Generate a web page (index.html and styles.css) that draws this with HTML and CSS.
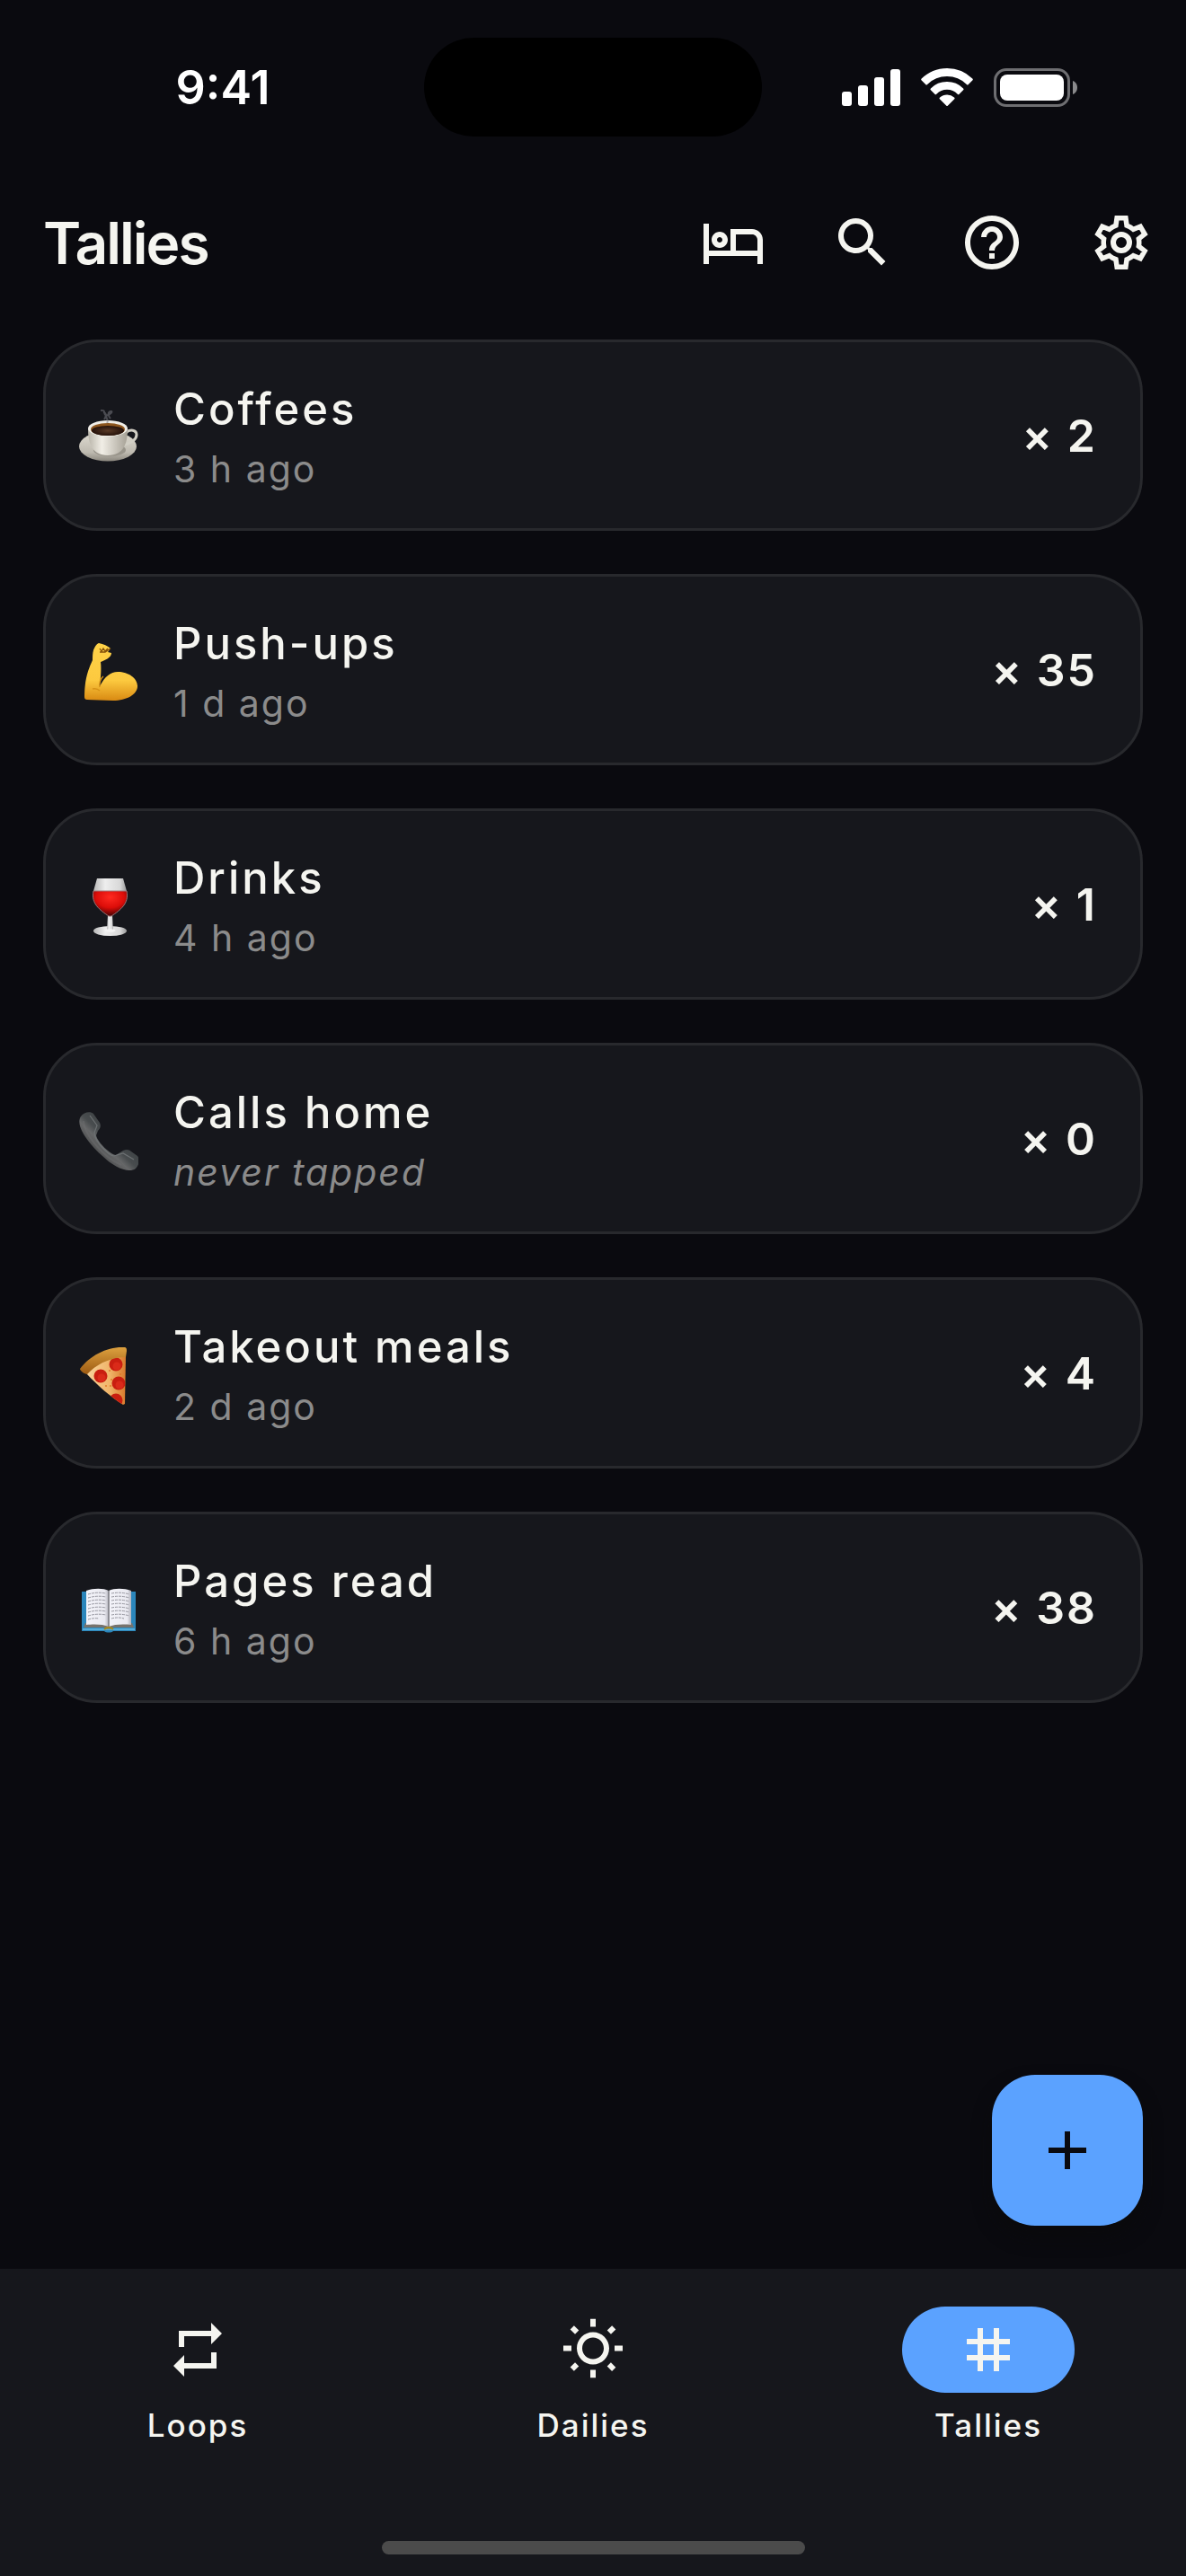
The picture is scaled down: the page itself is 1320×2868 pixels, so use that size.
FILE: index.html
```html
<!DOCTYPE html>
<html lang="en">
<head>
<meta charset="utf-8">
<meta name="viewport" content="width=device-width, initial-scale=1">
<title>Tallies</title>
<link rel="stylesheet" href="styles.css">
</head>
<body>
<div class="app">
  <div class="status">
    <time class="status-time">9:41</time>
    <div class="island"></div>
    <div class="status-icons">
      <svg width="65" height="41" viewBox="0 0 65 41" fill="#fff" aria-label="Signal">
        <rect x="0" y="25" width="11" height="16" rx="3"/><rect x="18" y="18" width="11" height="23" rx="3"/><rect x="36" y="9" width="11" height="32" rx="3"/><rect x="54" y="0" width="11" height="41" rx="3"/>
      </svg>
      <svg width="58" height="42" viewBox="0 0 58 42" fill="#fff" aria-label="Wi-Fi">
        <path d="M29 0C18 0 8 4.300 .7 11.500a1.300 1.300 0 0 0 0 1.900l4.500 4.500a1.300 1.300 0 0 0 1.900 0A31.400 31.400 0 0 1 29 9a31.400 31.400 0 0 1 21.900 8.900 1.300 1.300 0 0 0 1.900 0l4.500-4.500a1.300 1.300 0 0 0 0-1.900A40.400 40.400 0 0 0 29 0z"/>
        <path d="M29 15a25.500 25.500 0 0 0-18.100 7.400 1.300 1.300 0 0 0 0 1.900l4.500 4.500a1.300 1.300 0 0 0 1.900 0A16.800 16.800 0 0 1 29 23.800c4.500 0 8.600 1.800 11.700 5a1.300 1.300 0 0 0 1.900 0l4.500-4.500a1.300 1.300 0 0 0 0-1.900A25.500 25.500 0 0 0 29 15z"/>
        <path d="M29 29.500c-3 0-5.700 1-7.900 2.900a1.300 1.300 0 0 0 0 2l7 7.200a1.300 1.300 0 0 0 1.900 0l7-7.200a1.300 1.300 0 0 0 0-2A12 12 0 0 0 29 29.500z"/>
      </svg>
      <svg width="93" height="43" viewBox="0 0 93 43" aria-label="Battery">
        <rect x="1.500" y="1.500" width="82" height="40" rx="12.500" fill="none" stroke="#6e6e71" stroke-width="3"/>
        <rect x="7" y="7" width="71" height="29" rx="8" fill="#fff"/>
        <path d="M88 14c3 1 5 4 5 7.500s-2 6.500-5 7.500z" fill="#8a8a8c"/>
      </svg>
    </div>
  </div>

  <header class="header">
    <h1 class="title">Tallies</h1>
    <div class="actions">
      <button class="icon-button" type="button" aria-label="Rest mode"><svg class="icon" viewBox="0 0 24 24"><path d="M7 14c1.660 0 3-1.340 3-3S8.660 8 7 8s-3 1.340-3 3 1.340 3 3 3zm0-4c.55 0 1 .45 1 1s-.45 1-1 1-1-.45-1-1 .45-1 1-1zm12-3h-8v8H3V5H1v15h2v-3h18v3h2v-9c0-2.210-1.790-4-4-4zm2 8h-8V9h6c1.100 0 2 .9 2 2v4z"/></svg></button>
      <button class="icon-button" type="button" aria-label="Search"><svg class="icon" viewBox="0 0 24 24"><path d="M15.500 14h-.79l-.28-.27C15.410 12.590 16 11.110 16 9.500 16 5.910 13.090 3 9.500 3S3 5.910 3 9.500 5.910 16 9.500 16c1.610 0 3.090-.59 4.230-1.570l.27.28v.79l5 4.990L20.490 19l-4.990-5zm-6 0C7.010 14 5 11.990 5 9.500S7.010 5 9.500 5 14 7.010 14 9.500 11.990 14 9.500 14z"/></svg></button>
      <button class="icon-button" type="button" aria-label="Help"><svg class="icon" viewBox="0 0 24 24"><path d="M11 18h2v-2h-2v2zm1-16C6.480 2 2 6.480 2 12s4.480 10 10 10 10-4.480 10-10S17.520 2 12 2zm0 18c-4.410 0-8-3.590-8-8s3.590-8 8-8 8 3.590 8 8-3.590 8-8 8zm0-14c-2.210 0-4 1.790-4 4h2c0-1.100.9-2 2-2s2 .9 2 2c0 2-3 1.750-3 5h2c0-2.250 3-2.500 3-5 0-2.210-1.790-4-4-4z"/></svg></button>
      <button class="icon-button" type="button" aria-label="Settings"><svg class="icon" viewBox="0 0 24 24">
        <defs><path id="gear" d="M14.440 2H9.570L9.130 5.070C8.510 5.330 7.940 5.670 7.420 6.070L4.550 4.890 2.110 9.110 4.550 11.030C4.490 11.500 4.490 12.500 4.550 12.990L2.110 14.900 4.550 19.110 7.420 17.950C7.940 18.350 8.510 18.690 9.140 18.930L9.580 22H14.430L14.870 18.930C15.490 18.670 16.070 18.330 16.590 17.950L19.460 19.110 21.890 14.900 19.450 12.990C19.520 12.500 19.520 11.500 19.450 11.030L21.890 9.110 19.460 4.890 16.590 6.070C16.070 5.670 15.490 5.330 14.870 5.070z"/><clipPath id="gear-clip"><use href="#gear"/></clipPath></defs>
        <use href="#gear" clip-path="url(#gear-clip)" fill="none" stroke="currentColor" stroke-width="3.700"/>
        <circle cx="12" cy="12" r="3" fill="none" stroke="currentColor" stroke-width="2"/></svg></button>
    </div>
  </header>

  <main class="main">
    <ul class="list">
      <li><button class="card" type="button">
        <svg class="emoji" viewBox="0 0 66 66" aria-hidden="true">
          <defs>
            <linearGradient id="cup" x1="0" x2="1"><stop offset="0" stop-color="#b9b5aa"/><stop offset=".35" stop-color="#f1eee6"/><stop offset="1" stop-color="#a6a196"/></linearGradient>
            <linearGradient id="saucer" x1="0" y1="0" x2="0" y2="1"><stop offset="0" stop-color="#e0ddd3"/><stop offset=".7" stop-color="#bebab0"/><stop offset="1" stop-color="#8b877e"/></linearGradient>
            <radialGradient id="brew"><stop offset="0" stop-color="#5a3a26"/><stop offset="1" stop-color="#24110a"/></radialGradient>
          </defs>
          <ellipse cx="32" cy="42" rx="32" ry="16.500" fill="url(#saucer)"/>
          <ellipse cx="34" cy="46" rx="18" ry="7" fill="#99958b"/>
          <path d="M52 27c5-5 12-3 12 2 0 6-6 9-14 11" fill="none" stroke="#d2cfc5" stroke-width="3"/>
          <path d="M10 22c0 16 4 30 22 30s22-14 22-30z" fill="url(#cup)"/>
          <ellipse cx="32" cy="22" rx="22" ry="9" fill="#efede7"/>
          <ellipse cx="32" cy="23" rx="19" ry="7" fill="#8d561e"/>
          <ellipse cx="32" cy="24.500" rx="18" ry="5.500" fill="url(#brew)"/>
          <path d="M24 2c7-1 2 4 6 5s9-5 5-4-2 6 0 8M31 7c-3 3 3 5 0 9M27 4c4 1 3 5 1 8" fill="none" stroke="#77777e" stroke-width="2" opacity=".55"/>
        </svg>
        <span class="info"><span class="name">Coffees</span><span class="when">3 h ago</span></span>
        <span class="count">× 2</span>
      </button></li>
      <li><button class="card" type="button">
        <svg class="emoji" viewBox="0 0 66 66" aria-hidden="true">
          <defs><linearGradient id="skin" x1="0" y1="0" x2="0" y2="1"><stop offset="0" stop-color="#ffd348"/><stop offset=".65" stop-color="#fcc93f"/><stop offset="1" stop-color="#d98a12"/></linearGradient></defs>
          <path d="M22 0c-3 1-5 5-6 8-1 3-1 7-1 11-4 9-9 20-9 41 0 2 1 3 3 3 8 0 18 1 29 1 15 0 27-7 27-16 0-9-10-16-22-16-8 0-14 5-20 16 1-10 2-19 1-27 5-2 12-5 12-10l-4-1 3-4c-3-3-8-5-13-6z" fill="url(#skin)"/>
          <path d="M23 6l2 3 2-3 2 3 3-3M23 10h6l6-4" fill="none" stroke="#85520a" stroke-width="1.300"/>
          <path d="M15 51c4-1 6 0 8 2M23 49c-1-4 1-10 4-12" fill="none" stroke="#d79317" stroke-width="1.500"/>
        </svg>
        <span class="info"><span class="name">Push-ups</span><span class="when">1 d ago</span></span>
        <span class="count">× 35</span>
      </button></li>
      <li><button class="card" type="button">
        <svg class="emoji" viewBox="0 0 66 66" aria-hidden="true">
          <defs>
            <linearGradient id="glass" x1="0" x2="1"><stop offset="0" stop-color="#b7b7b7"/><stop offset=".35" stop-color="#eee"/><stop offset=".8" stop-color="#d8d8d8"/><stop offset="1" stop-color="#999"/></linearGradient>
            <radialGradient id="wine" cx=".5" cy=".25" r=".75"><stop offset="0" stop-color="#ff2a20"/><stop offset=".55" stop-color="#dc0d09"/><stop offset="1" stop-color="#420304"/></radialGradient>
          </defs>
          <ellipse cx="34.500" cy="59.500" rx="18.500" ry="5.500" fill="url(#glass)"/>
          <path d="M32 42h5l1 17c-2 2-5 2-7 0z" fill="url(#glass)"/>
          <path d="M20 1h29l4 14H16z" fill="url(#glass)"/>
          <path d="M16 15h37c3 14-7 21-17 28h-3C23 36 13 29 16 15z" fill="url(#wine)" stroke="#9b7779"/>
          <ellipse cx="34.500" cy="59" rx="6" ry="1.800" fill="#f3f3f3"/>
        </svg>
        <span class="info"><span class="name">Drinks</span><span class="when">4 h ago</span></span>
        <span class="count">× 1</span>
      </button></li>
      <li><button class="card" type="button">
        <svg class="emoji" viewBox="0 0 66 66" aria-hidden="true">
          <defs><linearGradient id="phone" x1="0" y1="1" x2="1" y2="0"><stop offset=".2" stop-color="#3a3b3c"/><stop offset=".42" stop-color="#666768"/><stop offset=".5" stop-color="#484c4e"/><stop offset=".8" stop-color="#34393c"/></linearGradient></defs>
          <path d="M2 5c3-5 11-6 14-3l7 10c2 4 0 7-2 9l-2 5c1 7 15 21 22 22l8-5c4-2 7-1 9 1l7 5c3 3 2 10-2 14-8 6-25-2-37-14C11 36-5 15 2 5z" fill="url(#phone)"/>
          <path d="M12 4l8 11-3 8c0 9 15 25 22 26l10-3 12 7" fill="none" stroke="#6d7173" stroke-width="1.200"/>
          <path d="M5 10c0 14 22 41 42 49" fill="none" stroke="#707172" stroke-width="2" opacity=".4"/>
        </svg>
        <span class="info"><span class="name">Calls home</span><span class="when never">never tapped</span></span>
        <span class="count">× 0</span>
      </button></li>
      <li><button class="card" type="button">
        <svg class="emoji" viewBox="0 0 66 66" aria-hidden="true">
          <defs><linearGradient id="cheese" x1="0" x2="1"><stop offset="0" stop-color="#f8d49c"/><stop offset=".6" stop-color="#f0b468"/><stop offset="1" stop-color="#d9792b"/></linearGradient><linearGradient id="crust" x1="0" y1="0" x2="0" y2="1"><stop offset="0" stop-color="#dda13f"/><stop offset="1" stop-color="#9c5a12"/></linearGradient><clipPath id="slice"><path d="M8 30C18 18 34 11 52 11l-1 53-2 1C36 57 20 43 8 30z"/></clipPath></defs>
          <path d="M8 30C18 18 34 11 52 11l-1 53-2 1C36 57 20 43 8 30z" fill="url(#cheese)"/>
          <g clip-path="url(#slice)">
            <g fill="#c91e10"><circle cx="41" cy="20" r="7.500"/><circle cx="24" cy="33" r="7.500"/><circle cx="44" cy="41" r="7.500"/><circle cx="41" cy="60" r="7.500"/></g>
            <g fill="#da2a19"><circle cx="42" cy="22" r="4.500"/><circle cx="25" cy="35" r="4.500"/><circle cx="45" cy="43" r="4.500"/></g>
            <g fill="#e07a28"><circle cx="34" cy="27" r="1"/><circle cx="35" cy="44" r="1"/><circle cx="30" cy="44" r="1"/><circle cx="36" cy="37" r="1"/><circle cx="46" cy="31" r="1"/></g>
          </g>
          <path d="M1 25C12 10 32 0 50 1c3 0 3 2 3 4l-1 7C35 12 19 20 9 31c-3 0-8-4-8-6z" fill="url(#crust)"/>
        </svg>
        <span class="info"><span class="name">Takeout meals</span><span class="when">2 d ago</span></span>
        <span class="count">× 4</span>
      </button></li>
      <li><button class="card" type="button">
        <svg class="emoji" viewBox="0 0 66 66" aria-hidden="true">
          <defs><linearGradient id="page" x1="0" x2="1"><stop offset="0" stop-color="#f4f4fa"/><stop offset=".82" stop-color="#eaeaf1"/><stop offset="1" stop-color="#b4b4bd"/></linearGradient></defs>
          <path d="M3 12h60v44H38c-2 2-8 2-10 0H3z" fill="#2b86bb"/>
          <path d="M4 54h58" stroke="#66b8e2" stroke-width="1.500"/>
          <path d="M7 47h52l2 5H38c-3 2-7 2-10 0H5z" fill="#77736d"/>
          <path d="M8 11c8-3 19-3 25 0v40c-6-3-18-3-25-2z" fill="url(#page)"/>
          <path d="M33 11c6-3 17-3 25 0v38c-7-1-19-1-25 2z" fill="url(#page)"/>
          <path d="M33 11v40" stroke="#77777e" stroke-width="1.500"/>
          <path d="M10 15q10-3 20-1M10 19q10-3 20-1M10 23q10-3 20-1M10 27q10-3 20-1M10 31q10-3 20-1M10 35q10-3 20-1M10 39q10-3 20-1M10 43q7-2 12-1M36 14q10-2 20 1M36 18q10-2 20 1M36 22q10-2 20 1M36 26q10-2 20 1M36 30q10-2 20 1M36 34q10-2 20 1M36 38q10-2 20 1M36 42q7-2 14 0" fill="none" stroke="#92929b" stroke-width="1" stroke-dasharray="3 1"/>
          <path d="M28 54q5-4 10 0" fill="none" stroke="#a98a18" stroke-width="2"/>
        </svg>
        <span class="info"><span class="name">Pages read</span><span class="when">6 h ago</span></span>
        <span class="count">× 38</span>
      </button></li>
    </ul>
    <button class="fab" type="button" aria-label="Add tally"><svg class="icon" viewBox="0 0 24 24"><path d="M19 13h-6v6h-2v-6H5v-2h6V5h2v6h6v2z"/></svg></button>
  </main>

  <footer class="footer">
    <nav class="tabs">
      <a class="tab" href="#loops"><span class="pill"><svg class="icon" viewBox="0 0 24 24"><path d="M7 7h10v3l4-4-4-4v3H5v6h2V7zm10 10H7v-3l-4 4 4 4v-3h12v-6h-2v4z"/></svg></span><span class="tab-label">Loops</span></a>
      <a class="tab" href="#dailies"><span class="pill"><svg class="icon" viewBox="0 0 24 24"><path d="M6.760 4.840l-1.800-1.790-1.410 1.410 1.790 1.790 1.420-1.410zM4 10.500H1v2h3v-2zm9-9.950h-2V3.500h2V.55zm7.450 3.910l-1.410-1.410-1.790 1.790 1.410 1.410 1.790-1.790zm-3.210 13.700l1.790 1.800 1.410-1.410-1.800-1.790-1.400 1.400zM20 10.500v2h3v-2h-3zm-8-5c-3.310 0-6 2.690-6 6s2.690 6 6 6 6-2.690 6-6-2.690-6-6-6zm0 10c-2.210 0-4-1.790-4-4s1.790-4 4-4 4 1.790 4 4-1.790 4-4 4zm-1 6.950h2V19.500h-2v2.950zm-7.450-3.910l1.410 1.410 1.790-1.800-1.410-1.410-1.790 1.800z"/></svg></span><span class="tab-label">Dailies</span></a>
      <a class="tab active" href="#tallies" aria-current="page"><span class="pill"><svg class="icon" viewBox="0 0 24 24"><path d="M20 10V8h-4V4h-2v4h-4V4H8v4H4v2h4v4H4v2h4v4h2v-4h4v4h2v-4h4v-2h-4v-4h4zm-6 4h-4v-4h4v4z"/></svg></span><span class="tab-label">Tallies</span></a>
    </nav>
    <div class="home-bar"></div>
  </footer>
</div>
</body>
</html>
```

FILE: styles.css
```css
* { box-sizing: border-box; }

body {
  margin: 0;
  background: #0a0a0f;
  color: #f5f5f0;
  font-family: Inter, "Liberation Sans", sans-serif;
}

button {
  margin: 0;
  padding: 0;
  border: 0;
  background: none;
  color: inherit;
  font: inherit;
  letter-spacing: inherit;
  cursor: pointer;
}

svg { display: block; flex: none; }

.app {
  display: flex;
  flex-direction: column;
  min-height: 100vh;
}

/* Status bar */
.status {
  display: grid;
  grid-template-columns: 1fr 376px 1fr;
  align-items: center;
  padding: 42px 0 34px;
  color: #fff;
}
.status-time {
  padding: 2px 0 0 24px;
  text-align: center;
  font-size: 52px;
  line-height: 60px;
  font-weight: 600;
}
.island {
  height: 110px;
  border-radius: 55px;
  background: #000;
}
.status-icons {
  display: flex;
  align-items: center;
  justify-content: center;
  gap: 23px;
  padding-right: 33px;
}

/* Header */
.header {
  display: flex;
  align-items: center;
  justify-content: space-between;
  height: 168px;
  padding: 0 36px 0 48px;
}
.title {
  margin: 0;
  padding-top: 2px;
  font-size: 64px;
  line-height: 84px;
  font-weight: 600;
  letter-spacing: -2px;
}
.actions { display: flex; gap: 72px; }
.icon { width: 72px; height: 72px; fill: currentColor; }

/* Tally list */
.main {
  position: relative;
  flex: 1;
  padding: 24px 48px 264px;
}
.list {
  display: flex;
  flex-direction: column;
  gap: 48px;
  margin: 0;
  padding: 0;
  list-style: none;
}
.card {
  display: flex;
  align-items: center;
  width: 100%;
  padding: 45px 48px 39px 37px;
  border: 3px solid #28292d;
  border-radius: 60px;
  background: #16171c;
  text-align: left;
  letter-spacing: 2px;
}
.emoji { width: 66px; height: 66px; margin-right: 39px; }
.info {
  display: flex;
  flex: 1;
  flex-direction: column;
  gap: 9px;
}
.name {
  font-size: 49px;
  line-height: 60px;
  font-weight: 500;
  letter-spacing: 3px;
}
.when { color: #8b8b8b; font-size: 41px; line-height: 54px; }
.never { font-style: italic; }
.count {
  padding-bottom: 6px;
  font-size: 50px;
  line-height: 60px;
  font-weight: 600;
}

.fab {
  position: absolute;
  right: 48px;
  bottom: 48px;
  display: grid;
  place-items: center;
  width: 168px;
  height: 168px;
  border-radius: 48px;
  background: #5ba2ff;
  box-shadow: 0 12px 20px rgba(10, 10, 10, 0.6);
  color: #0a0a0f;
}

/* Bottom navigation */
.footer { padding: 42px 0 24px; background: #16171c; }
.tabs { display: grid; grid-template-columns: repeat(3, 1fr); }
.tab {
  display: flex;
  flex-direction: column;
  align-items: center;
  gap: 12px;
  color: inherit;
  text-decoration: none;
}
.pill {
  display: grid;
  place-items: center;
  width: 192px;
  height: 96px;
  border-radius: 48px;
}
.active .pill { background: #5ba2ff; }
.tab-label {
  font-size: 35px;
  line-height: 48px;
  font-weight: 500;
  letter-spacing: 2px;
}
.home-bar {
  width: 471px;
  max-width: 60%;
  height: 15px;
  margin: 105px auto 0;
  border-radius: 8px;
  background: #4b4b4b;
}
```
